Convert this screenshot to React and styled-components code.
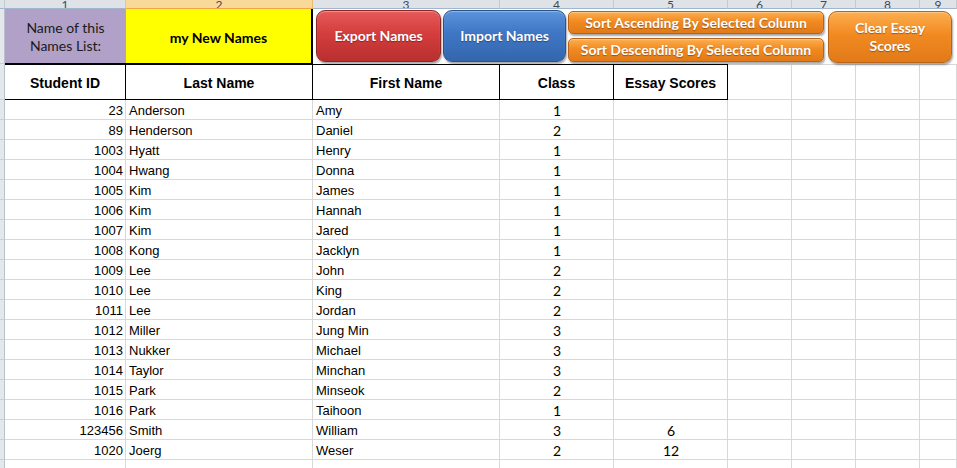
import React from 'react';
import styled, { createGlobalStyle, css } from 'styled-components';

const students = [
    ['23', 'Anderson', 'Amy', '1', ''],
    ['89', 'Henderson', 'Daniel', '2', ''],
    ['1003', 'Hyatt', 'Henry', '1', ''],
    ['1004', 'Hwang', 'Donna', '1', ''],
    ['1005', 'Kim', 'James', '1', ''],
    ['1006', 'Kim', 'Hannah', '1', ''],
    ['1007', 'Kim', 'Jared', '1', ''],
    ['1008', 'Kong', 'Jacklyn', '1', ''],
    ['1009', 'Lee', 'John', '2', ''],
    ['1010', 'Lee', 'King', '2', ''],
    ['1011', 'Lee', 'Jordan', '2', ''],
    ['1012', 'Miller', 'Jung Min', '3', ''],
    ['1013', 'Nukker', 'Michael', '3', ''],
    ['1014', 'Taylor', 'Minchan', '3', ''],
    ['1015', 'Park', 'Minseok', '2', ''],
    ['1016', 'Park', 'Taihoon', '1', ''],
    ['123456', 'Smith', 'William', '3', '6'],
    ['1020', 'Joerg', 'Weser', '2', '12'],
    ['', '', '', '', ''],
];

const columns = ['1', '2', '3', '4', '5', '6', '7', '8', '9'];
const headers = ['Student ID', 'Last Name', 'First Name', 'Class', 'Essay Scores'];

export default function App() {
    return (
        <>
            <GlobalStyle />
            <Sheet>
                <Corner />
                {columns.map((c, i) => (
                    <ColHead key={c} $active={i === 1}>
                        <ColLabel>{c}</ColLabel>
                    </ColHead>
                ))}

                <RowHead />
                <NameLabel>Name of this<br />Names List:</NameLabel>
                <NameValue>my New Names</NameValue>
                <ButtonBar>
                    <Button $tone="red" $w={125} $h={52}>Export Names</Button>
                    <Button $tone="blue" $w={123} $h={52}>Import Names</Button>
                    <SortStack>
                        <Button $tone="orange" $w={256} $h={23}>Sort Ascending By Selected Column</Button>
                        <Button $tone="orange" $w={256} $h={24}>Sort Descending By Selected Column</Button>
                    </SortStack>
                    <ClearButton $tone="orange" $w={124} $h={52}>Clear Essay<br />Scores</ClearButton>
                </ButtonBar>

                <RowHead />
                {headers.map((h) => (
                    <HeaderCell key={h}>{h}</HeaderCell>
                ))}
                <BlankHeader />
                <BlankHeader />
                <BlankHeader />
                <BlankHeader />

                {students.map((s, r) => (
                    <React.Fragment key={r}>
                        <RowHead />
                        <Cell $align="right">{s[0]}</Cell>
                        <Cell>{s[1]}</Cell>
                        <Cell>{s[2]}</Cell>
                        <Cell $align="center" $calibri>{s[3]}</Cell>
                        <Cell $align="center" $calibri>{s[4]}</Cell>
                        <Cell />
                        <Cell />
                        <Cell />
                        <Cell />
                    </React.Fragment>
                ))}
            </Sheet>
        </>
    );
}

const GlobalStyle = createGlobalStyle`
    html, body {
        margin: 0;
        padding: 0;
        background: #ffffff;
        overflow: hidden;
    }
`;

const Sheet = styled.div`
    display: grid;
    grid-template-columns: 5px 121px 187px 187px 114px 114px 64px 64px 64px 1fr;
    grid-template-rows: 9px 55px 36px repeat(19, 20px);
    width: 957px;
    height: 468px;
    overflow: hidden;
    font-family: "Liberation Sans", Arial, sans-serif;
    color: #000;
`;

const Corner = styled.div`
    background: #dfe3e8;
    border-right: 1px solid #c5cad1;
    border-bottom: 1px solid #9eb6ce;
`;

const ColHead = styled.div`
    display: flex;
    align-items: flex-end;
    justify-content: center;
    overflow: hidden;
    background: ${(p) => (p.$active ? '#f9d99a' : '#dfe3e8')};
    border-right: 1px solid ${(p) => (p.$active ? '#e7bc6c' : '#c5cad1')};
    border-bottom: 1px solid ${(p) => (p.$active ? '#f0a93c' : '#9eb6ce')};
`;

const ColLabel = styled.span`
    font-family: Lato, "Liberation Sans", sans-serif;
    font-size: 12px;
    line-height: 12px;
    color: #3c4a5c;
    margin-bottom: -3px;
`;

const RowHead = styled.div`
    background: #e4e7ec;
    border-right: 1px solid #b8c0ca;
    border-bottom: 1px solid #c9ced5;
`;

const Cell = styled.div`
    display: flex;
    align-items: center;
    justify-content: ${(p) => (p.$align === 'right' ? 'flex-end' : p.$align === 'center' ? 'center' : 'flex-start')};
    padding: 1px 2px 0 3px;
    border-right: 1px solid #d8d8d8;
    border-bottom: 1px solid #d8d8d8;
    font-size: 13px;
    white-space: nowrap;
    ${(p) => p.$calibri && css`
        font-family: Lato, "Liberation Sans", sans-serif;
        font-size: 14px;
    `}
`;

const NameLabel = styled.div`
    display: flex;
    align-items: center;
    justify-content: center;
    text-align: center;
    background: #b1a0c7;
    border-bottom: 1px solid #000;
    font-family: Lato, "Liberation Sans", sans-serif;
    font-size: 14px;
    line-height: 18px;
    color: #1a1a1a;
    padding-top: 2px;
`;

const NameValue = styled.div`
    display: flex;
    align-items: center;
    justify-content: center;
    background: #ffff00;
    border-right: 2px solid #000;
    border-bottom: 1px solid #000;
    font-family: Lato, "Liberation Sans", sans-serif;
    font-size: 14px;
    font-weight: bold;
    padding-top: 2px;
`;

const ButtonBar = styled.div`
    grid-column: 4 / -1;
    display: flex;
    align-items: flex-start;
    gap: 2px;
    padding: 1px 0 0 3px;
    position: relative;
    z-index: 1;
`;

const tones = {
    red: { top: '#e65a5a', mid: '#d43d3d', bottom: '#b92f2f', border: '#8e2626' },
    blue: { top: '#5c93dc', mid: '#3f76c4', bottom: '#3466ad', border: '#2a5288' },
    orange: { top: '#fcae4f', mid: '#f28a22', bottom: '#e17a17', border: '#b8621a' },
};

const Button = styled.div`
    box-sizing: border-box;
    width: ${(p) => p.$w}px;
    height: ${(p) => p.$h}px;
    display: flex;
    align-items: center;
    justify-content: center;
    text-align: center;
    border-radius: ${(p) => (p.$h > 30 ? 9 : 5)}px;
    border: 1px solid ${(p) => tones[p.$tone].border};
    background: linear-gradient(
        to bottom,
        ${(p) => tones[p.$tone].top} 0%,
        ${(p) => tones[p.$tone].mid} 45%,
        ${(p) => tones[p.$tone].bottom} 100%
    );
    box-shadow: 1px 2px 2px rgba(0, 0, 0, 0.35), inset 0 1px 1px rgba(255, 255, 255, 0.35);
    color: #ffffff;
    font-family: Lato, "Liberation Sans", sans-serif;
    font-size: 14px;
    font-weight: bold;
    line-height: 18px;
    text-shadow: 0 1px 1px rgba(0, 0, 0, 0.35);
    white-space: nowrap;
`;

const SortStack = styled.div`
    display: flex;
    flex-direction: column;
    gap: 4px;
    margin-top: 1px;
`;

const ClearButton = styled(Button)`
    margin: 1px 0 0 2px;
`;

const HeaderCell = styled.div`
    display: flex;
    align-items: center;
    justify-content: center;
    padding-top: 1px;
    border-top: 1px solid #000;
    border-right: 1px solid #000;
    border-bottom: 1px solid #000;
    font-size: 14px;
    font-weight: bold;
`;

const BlankHeader = styled.div`
    border-top: 1px solid #d8d8d8;
    border-right: 1px solid #d8d8d8;
    border-bottom: 1px solid #d8d8d8;
`;
